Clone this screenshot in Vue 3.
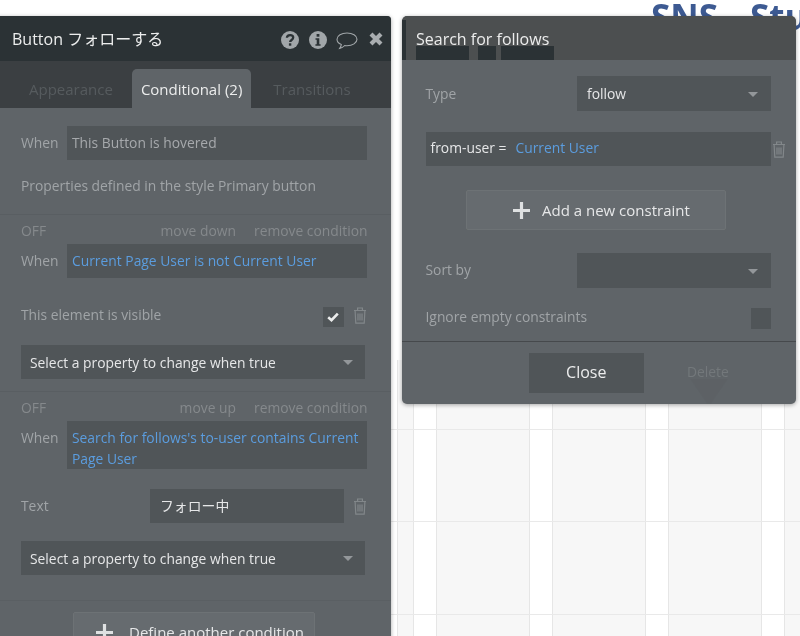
<script setup>
const tabs = [
  { label: 'Appearance', active: false },
  { label: 'Conditional (2)', active: true },
  { label: 'Transitions', active: false }
]
const maskBlocks = ['one', 'two', 'three']
</script>

<template>
  <div class="stage">
    <div class="canvas"></div>
    <div class="heading">SNS<span class="heading-gap">Study</span></div>

    <section class="window left-window">
      <header class="left-head">
        <span class="left-title">Button フォローする</span>
        <div class="head-icons">
          <svg class="ic-circle" viewBox="0 0 18 18">
            <circle cx="9" cy="9" r="9" fill="#a1a6a9" />
            <path d="M5.9 6.8C6 5 7.4 4.1 9.1 4.1c1.800 0 3.100 1 3.100 2.500 0 2.400-3.100 2.300-3.100 4.500" fill="none" stroke="#2b3235" stroke-width="2.300" />
            <rect x="7.900" y="12.300" width="2.400" height="2.400" fill="#2b3235" />
          </svg>
          <svg class="ic-circle" viewBox="0 0 18 18">
            <circle cx="9" cy="9" r="9" fill="#a1a6a9" />
            <rect x="7.600" y="3" width="2.800" height="2.700" fill="#2b3235" />
            <path d="M6.500 7.300h3.800v6h1.300v1.500H6.400v-1.500h1.300V8.800H6.500z" fill="#2b3235" />
          </svg>
          <svg class="ic-bubble" viewBox="0 0 22 18">
            <path d="M11 1C5.500 1 1 3.700 1 7.300c0 2.300 1.700 4.200 4.300 5.300-.2 1.400-.8 2.700-1.600 3.800 2-.4 3.700-1.500 5-2.900.7.100 1.500.2 2.300.2 5.500 0 10-2.800 10-6.400S16.500 1 11 1z" fill="none" stroke="#a1a6a9" stroke-width="1.100" />
          </svg>
          <svg class="ic-x" viewBox="0 0 14 14">
            <path d="M2 2l10 10M12 2L2 12" stroke="#a9adb0" stroke-width="4.200" />
          </svg>
        </div>
      </header>

      <nav class="tabs">
        <div v-for="tab in tabs" :key="tab.label" class="tab" :class="{ active: tab.active }">{{ tab.label }}</div>
      </nav>

      <div class="section first">
        <div class="when-row">
          <span class="label when-label">When</span>
          <div class="field muted">This Button is hovered</div>
        </div>
        <p class="label props">Properties defined in the style Primary button</p>
      </div>

      <div class="section second">
        <div class="meta-row">
          <span class="meta-off">OFF</span>
          <span class="meta-link down">move down</span>
          <span class="meta-link">remove condition</span>
        </div>
        <div class="when-row tight">
          <span class="label when-label">When</span>
          <div class="field blue">Current Page User is not Current User</div>
        </div>
        <div class="visible-row">
          <span class="label">This element is visible</span>
          <span class="check">
            <svg viewBox="0 0 12 10" width="12" height="10"><path d="M1.200 5.200l3.300 3 6.300-6.600" fill="none" stroke="#eceded" stroke-width="2.600" /></svg>
          </span>
          <svg class="trash" viewBox="0 0 14 17">
            <path d="M1 3.500h12M4.600 3.200V1h4.800v2.200M2.100 3.800l.7 12.400h8.400l.7-12.400M5 6.500v7M7 6.500v7M9 6.500v7" fill="none" stroke="#82878a" stroke-width="1.200" />
          </svg>
        </div>
        <div class="select prop-select">
          <span>Select a property to change when true</span>
          <i class="caret"></i>
        </div>
      </div>

      <div class="section third">
        <div class="meta-row">
          <span class="meta-off">OFF</span>
          <span class="meta-link up">move up</span>
          <span class="meta-link">remove condition</span>
        </div>
        <div class="when-row tight">
          <span class="label when-label top">When</span>
          <div class="field blue multi">Search for follows's to-user contains Current Page User</div>
        </div>
        <div class="text-row">
          <span class="label text-label">Text</span>
          <div class="field light jp">フォロー中</div>
          <svg class="trash" viewBox="0 0 14 17">
            <path d="M1 3.500h12M4.600 3.200V1h4.800v2.200M2.100 3.800l.7 12.400h8.400l.7-12.400M5 6.500v7M7 6.500v7M9 6.500v7" fill="none" stroke="#82878a" stroke-width="1.200" />
          </svg>
        </div>
        <div class="select prop-select">
          <span>Select a property to change when true</span>
          <i class="caret"></i>
        </div>
      </div>

      <div class="section fourth">
        <button class="add define">
          <svg class="plus" viewBox="0 0 17 17"><path d="M8.500 0v17M0 8.500h17" stroke="#dfe1e2" stroke-width="3.200" /></svg>
          <span>Define another condition</span>
        </button>
      </div>
    </section>

    <section class="window right-window">
      <header class="right-head">
        <span class="edge-dark"></span>
        <span v-for="b in maskBlocks" :key="b" class="mask" :class="b"></span>
        <span class="right-title">Search for follows</span>
      </header>

      <div class="right-body">
        <div class="type-row">
          <span class="label">Type</span>
          <div class="select small">
            <span>follow</span>
            <i class="caret"></i>
          </div>
        </div>

        <div class="constraint-row">
          <div class="constraint">
            <span class="light">from-user =</span>
            <span class="blue-text">Current User</span>
          </div>
          <svg class="trash" viewBox="0 0 14 17">
            <path d="M1 3.500h12M4.600 3.200V1h4.800v2.200M2.100 3.800l.7 12.400h8.400l.7-12.400M5 6.500v7M7 6.500v7M9 6.500v7" fill="none" stroke="#82878a" stroke-width="1.200" />
          </svg>
        </div>

        <button class="add constraint-btn">
          <svg class="plus" viewBox="0 0 17 17"><path d="M8.500 0v17M0 8.500h17" stroke="#dfe1e2" stroke-width="3.200" /></svg>
          <span>Add a new constraint</span>
        </button>

        <div class="type-row sort-row">
          <span class="label">Sort by</span>
          <div class="select small"><span></span><i class="caret"></i></div>
        </div>

        <div class="ignore-row">
          <span class="label">Ignore empty constraints</span>
          <span class="check"></span>
        </div>
      </div>

      <footer class="right-foot">
        <button class="close">Close</button>
        <span class="delete">Delete</span>
        <span class="dither"></span>
      </footer>
    </section>
  </div>
</template>

<style>
html, body { margin: 0; background: #fff; }
</style>

<style scoped>
.stage {
  position: relative;
  width: 800px;
  height: 636px;
  overflow: hidden;
  background: #fff;
  font-family: "Open Sans", "Noto Sans CJK JP", sans-serif;
  font-size: 13.850px;
  color: #e6e7e8;
  filter: blur(0.3px);
}
.canvas {
  position: absolute;
  left: 297px;
  top: 360px;
  width: 503px;
  height: 276px;
  background-color: #f7f7f7;
  background-image:
    repeating-linear-gradient(180deg, transparent 0, transparent 69px, #e9e9e9 69px, #e9e9e9 70px, transparent 70px, transparent 92.500px),
    repeating-linear-gradient(90deg, #e6e6e6 0, #e6e6e6 1px, #fff 1px, #fff 23px, #e6e6e6 23px, #e6e6e6 24px, #f7f7f7 24px, #f7f7f7 116px);
  background-position: 0 0, 116px 0;
  background-size: auto 277.500px, auto;
}
.heading {
  position: absolute;
  left: 651px;
  top: -7px;
  font-size: 35px;
  line-height: 48px;
  font-weight: 700;
  color: #3d5a92;
  white-space: nowrap;
}
.heading-gap { margin-left: 32px; }

.window {
  position: absolute;
  top: 16px;
  background: #5f6468;
  box-shadow: 0 1px 4px rgba(0, 0, 0, .35);
}
.left-window {
  left: -4px;
  width: 394.500px;
  height: 640px;
  border-radius: 0 4px 0 0;
  padding-left: 4px;
  box-sizing: border-box;
}
.left-head {
  display: flex;
  align-items: center;
  height: 45px;
  margin-left: -4px;
  padding-left: 16px;
  background: #2b3235;
  border-radius: 0 4px 0 0;
}
.left-title {
  font-size: 16px;
  line-height: 24px;
  color: #eceded;
  white-space: nowrap;
}
.head-icons {
  display: flex;
  align-items: center;
  margin-left: auto;
  height: 100%;
  margin-top: 2px;
}
.ic-circle { width: 18px; height: 18px; margin-right: 10px; }
.ic-bubble { width: 22px; height: 18px; margin-left: -1px; margin-top: 3px; margin-right: 11px; }
.ic-x { width: 14px; height: 14px; margin-right: 7.500px; margin-top: -1px; }

.tabs {
  display: flex;
  align-items: flex-end;
  gap: 10px;
  height: 47px;
  margin-left: -4px;
  padding-left: 24px;
  background: #3b3f42;
}
.tab {
  height: 39px;
  padding: 0 9px;
  line-height: 41px;
  font-size: 15px;
  color: #565b5e;
  border-radius: 5px 5px 0 0;
  white-space: nowrap;
}
.tab:last-child { padding-left: 12px; }
.tab.active { background: #5f6468; color: #eceded; }

.section { padding: 0 24px 0 21px; border-top: 1px solid #595e62; }
.section.first { border-top: 0; padding-top: 18px; height: 88px; }
.section.second { height: 177px; padding-top: 6px; box-sizing: border-box; }
.section.third { height: 209px; padding-top: 6px; box-sizing: border-box; }
.section.fourth { padding-top: 11px; border-top-color: #5a5f63; }

.label { color: #a0a4a7; line-height: 20px; }
.when-row { display: flex; align-items: center; }
.when-row.tight { margin-top: 3px; }
.when-label { width: 46px; flex: none; }
.when-label.top { align-self: flex-start; padding-top: 7px; }
.field {
  flex: 1;
  min-height: 34px;
  box-sizing: border-box;
  padding: 7px 5px;
  line-height: 20px;
  background: #505558;
}
.field.muted { color: #a6a9ac; }
.field.blue { color: #5b9ddf; }
.field.multi { line-height: 21px; padding: 6px 5px 0; }
.field.light { color: #e6e7e8; }
.props { margin: 16px 0 0; }

.meta-row { display: flex; height: 20px; line-height: 20px; color: #85898c; margin-right: -1px; }
.meta-off { margin-right: auto; }
.meta-link { margin-left: 18px; white-space: nowrap; }

.visible-row {
  display: flex;
  align-items: center;
  margin-top: 29px;
  height: 20px;
}
.visible-row .label { margin-right: auto; margin-top: -4px; }
.check {
  display: flex;
  align-items: center;
  justify-content: center;
  width: 20.500px;
  height: 20.500px;
  background: #505558;
}
.trash { width: 14px; height: 17px; flex: none; }
.visible-row .trash { margin-left: 9px; margin-top: -4px; }

.select {
  display: flex;
  align-items: center;
  justify-content: space-between;
  box-sizing: border-box;
  height: 34px;
  background: #505558;
  color: #e6e7e8;
}
.prop-select {
  width: 344px;
  margin-top: 18px;
  padding: 0 12px 0 9px;
}
.caret {
  width: 0;
  height: 0;
  border-left: 5px solid transparent;
  border-right: 5px solid transparent;
  border-top: 5px solid #93979a;
  margin-top: 1px;
}

.text-row { display: flex; align-items: center; margin-top: 20px; }
.text-label { width: 129px; flex: none; }
.text-row .field { flex: none; width: 194px; padding-left: 10px; }
.text-row .trash { margin-left: 9px; }
.jp { font-size: 13.850px; }

.add {
  display: flex;
  align-items: center;
  box-sizing: border-box;
  height: 40px;
  padding: 0;
  border: 1px solid #6d7275;
  border-radius: 2px;
  background: #666b6f;
  color: #e6e7e8;
  font: inherit;
  font-size: 15px;
}
.define { width: 242px; margin-left: 52px; padding-left: 22px; }
.plus { width: 17px; height: 17px; flex: none; }
.define span { margin-left: 16px; white-space: nowrap; }

.right-window {
  left: 402px;
  width: 393.500px;
  height: 388px;
  border-radius: 5px;
  overflow: hidden;
}
.right-head {
  position: relative;
  height: 44px;
  background: #4c4f50;
  border-radius: 5px 5px 0 0;
}
.right-title {
  position: absolute;
  left: 14px;
  top: 11px;
  font-size: 16px;
  line-height: 24px;
  color: #eceded;
  white-space: nowrap;
}
.mask { position: absolute; top: 30px; height: 14px; background: #2b3235; }
.mask.one { left: 14px; width: 53px; }
.mask.two { left: 76px; width: 18px; }
.mask.three { left: 99px; width: 53px; }
.edge-dark { position: absolute; left: 0; top: 4px; width: 4px; height: 40px; background: #2b3235; }

.right-body { padding: 16px 0 0 23.500px; }
.type-row { display: flex; align-items: center; }
.sort-row .label { margin-top: -2px; }
.select.small { width: 194px; height: 35px; margin-left: auto; margin-right: 24.500px; padding: 0 13px 0 10px; }
.constraint-row { display: flex; align-items: center; margin-top: 21px; }
.constraint {
  display: flex;
  width: 345px;
  height: 34px;
  align-items: center;
  box-sizing: border-box;
  padding: 0 0 4px 5px;
  background: #505558;
}
.blue-text { color: #5b9ddf; margin-left: 9px; }
.light { color: #e6e7e8; }
.constraint-row .trash { margin-left: 1px; }
.constraint-btn {
  width: 260px;
  margin: 24px 0 0 40.500px;
  padding-left: 46px;
}
.constraint-btn span { margin-left: 12px; white-space: nowrap; }
.sort-row { margin-top: 23px; }
.ignore-row { display: flex; align-items: center; margin-top: 20px; }
.ignore-row .label { margin-right: auto; margin-top: -2px; }
.ignore-row .check { margin-right: 24.500px; }

.right-foot {
  position: relative;
  display: flex;
  align-items: center;
  height: 63px;
  margin-top: 12px;
  border-top: 1px solid #46494c;
  box-sizing: border-box;
}
.close {
  width: 115.500px;
  height: 40px;
  margin-left: 126.500px;
  margin-top: 1px;
  border: 0;
  padding: 0 0 2px;
  background: #505558;
  color: #eceded;
  font: inherit;
  font-size: 16px;
}
.delete { margin-left: 43px; margin-top: -3px; color: #73787b; }
.dither {
  position: absolute;
  left: 288px;
  top: 37px;
  width: 38px;
  height: 25px;
  clip-path: polygon(0 0, 100% 0, 55% 100%, 45% 100%);
  background: #585d60;
  opacity: .3;
}
</style>
